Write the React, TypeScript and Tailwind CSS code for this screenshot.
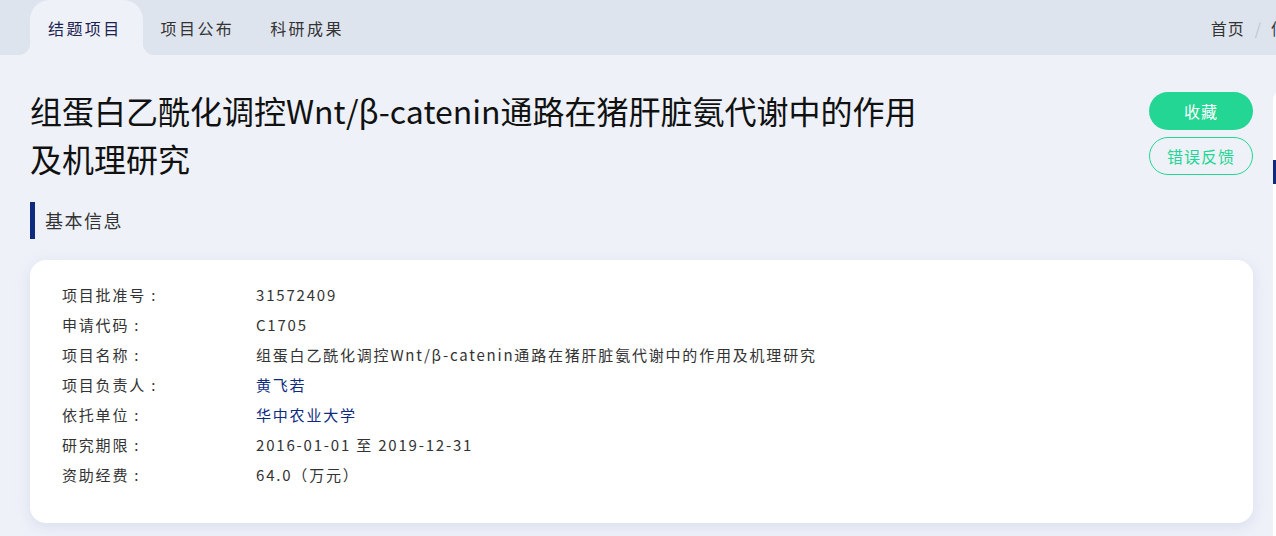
import React from "react";

const rows: { label: string; value: string; link?: boolean }[] = [
  { label: "项目批准号:", value: "31572409" },
  { label: "申请代码:", value: "C1705" },
  { label: "项目名称:", value: "组蛋白乙酰化调控Wnt/β-catenin通路在猪肝脏氨代谢中的作用及机理研究" },
  { label: "项目负责人:", value: "黄飞若", link: true },
  { label: "依托单位:", value: "华中农业大学", link: true },
  { label: "研究期限:", value: "2016-01-01 至 2019-12-31" },
  { label: "资助经费:", value: "64.0（万元）" },
];

export default function App() {
  return (
    <div
      className="w-[1276px] h-[536px] overflow-hidden bg-[#eef1f8] text-[#333]"
      style={{ fontFamily: '"Noto Sans CJK SC", "Noto Sans", sans-serif' }}
    >
      <header className="h-[55px] bg-[#dee4ee] flex items-end justify-between">
        <nav className="flex items-end pl-[30px] h-full">
          <div className="relative h-full flex items-center pl-[18px] pr-[21px] bg-[#eef1f8] rounded-t-[20px] text-[16px] tracking-[2.4px] text-[#1c2350]">
            结题项目
            <span className="absolute bottom-0 -left-[12px] w-[12px] h-[12px] bg-[radial-gradient(circle_at_0%_0%,#dee4ee_12px,#eef1f8_12.5px)]" />
            <span className="absolute bottom-0 -right-[12px] w-[12px] h-[12px] bg-[radial-gradient(circle_at_100%_0%,#dee4ee_12px,#eef1f8_12.5px)]" />
          </div>
          <div className="h-full flex items-center px-[18px] text-[16px] tracking-[2.4px] text-[#333]">项目公布</div>
          <div className="h-full flex items-center px-[18px] text-[16px] tracking-[2.4px] text-[#333]">科研成果</div>
        </nav>
        <div className="h-full flex items-center gap-[10px] text-[16px] text-[#333] whitespace-nowrap -mr-[29px]">
          <span className="tracking-[1px]">首页</span>
          <span className="text-[#c0c4cc]">/</span>
          <span className="tracking-[1px]">信息</span>
        </div>
      </header>

      <div className="flex gap-[20px]">
        <main className="w-[1253px] shrink-0 pl-[30px]">
          <div className="flex justify-between items-start pt-[31px]">
            <h1 className="max-w-[900px] text-[32px] leading-[48px] text-[#111] font-normal">
              组蛋白乙酰化调控Wnt/β-catenin通路在猪肝脏氨代谢中的作用及机理研究
            </h1>
            <div className="flex flex-col gap-[7px] pt-[6px]">
              <button className="w-[104px] h-[38px] rounded-full bg-[#24d694] text-white text-[16px] tracking-[1px]">收藏</button>
              <button className="w-[104px] h-[38px] rounded-full border border-[#24d694] text-[#24d694] text-[16px] tracking-[1px]">错误反馈</button>
            </div>
          </div>

          <div className="mt-[20px] flex items-center h-[37px] border-l-[5px] border-[#0d2a7e] pl-[10px] text-[18px] tracking-[1.5px] text-[#333]">
            基本信息
          </div>

          <section className="mt-[21px] bg-white rounded-[16px] shadow-[0_4px_14px_rgba(180,190,220,0.35)] pt-[20px] pb-[33px] pl-[32px]">
            {rows.map((r) => (
              <div key={r.label} className="flex h-[30px] items-center text-[15px] tracking-[1.8px]">
                <div className="w-[194px] text-[#333]">{r.label.replace(":", " :")}</div>
                <div className={r.link ? "text-[#0d2a7e]" : "text-[#333]"}>{r.value}</div>
              </div>
            ))}
          </section>
        </main>

        <aside className="w-[200px] shrink-0 mt-[34px] h-[600px] bg-white rounded-tl-[12px] pt-[71px]">
          <div className="w-[3px] h-[24px] bg-[#0d2a7e]" />
        </aside>
      </div>
    </div>
  );
}
